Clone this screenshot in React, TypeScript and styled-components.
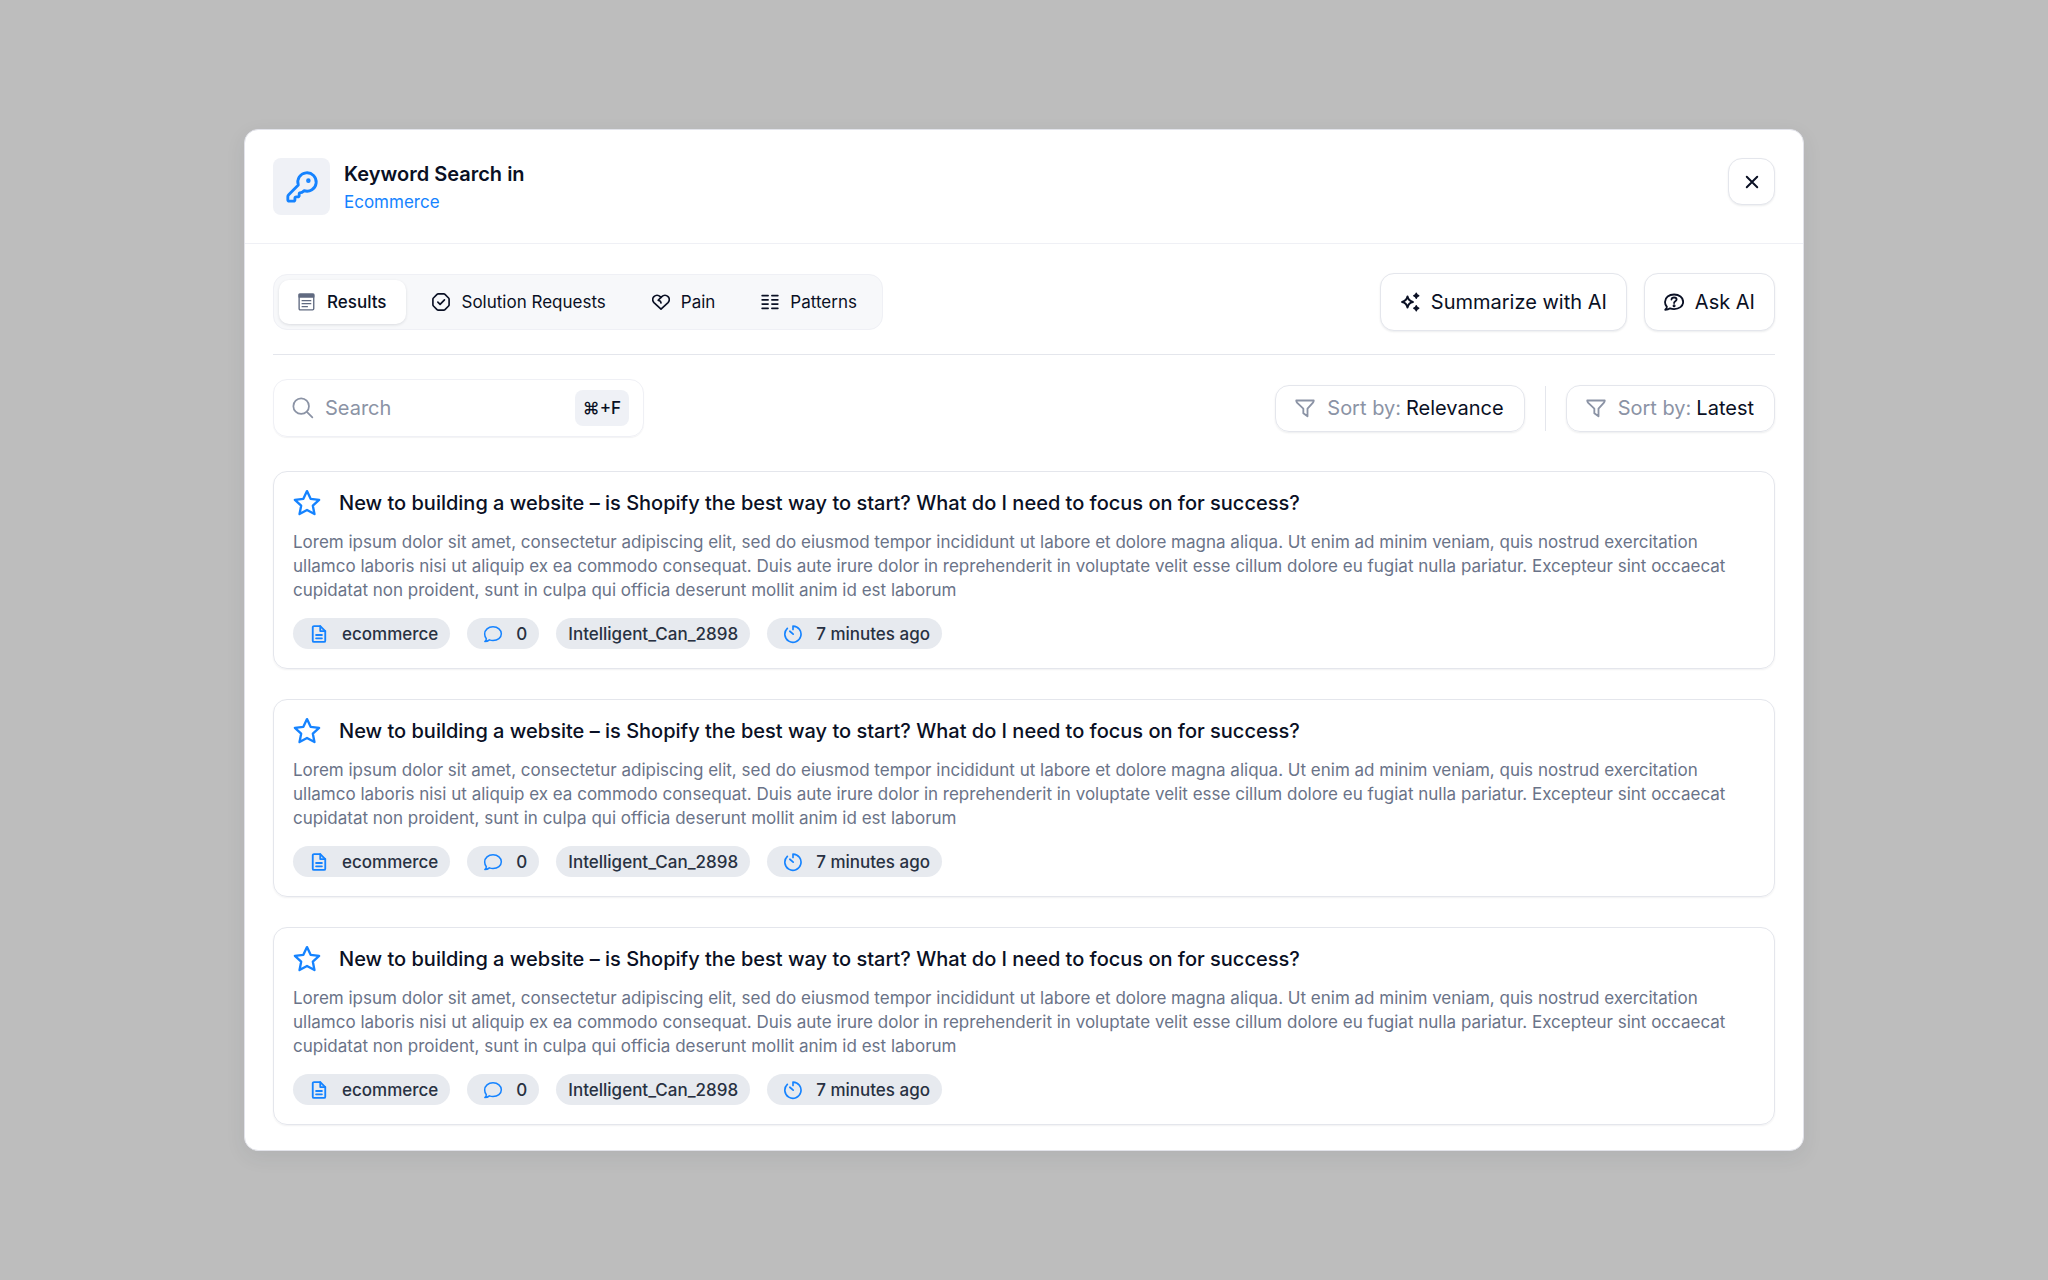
import React from "react";
import styled, { createGlobalStyle } from "styled-components";

const color = {
  ink: "#0a1024",
  text: "#283142",
  muted: "#6a7388",
  faint: "#8b93a5",
  blue: "#1583ff",
  line: "#e4e6ec",
  lineSoft: "#eff0f5",
  fill: "#eff1f6",
  pill: "#e7eaef",
};

const GlobalStyle = createGlobalStyle`
  *, *::before, *::after { box-sizing: border-box; }
  body {
    margin: 0;
    background: #bdbdbd;
    color: ${color.ink};
    font-family: Inter, "Liberation Sans", sans-serif;
    font-size: 17px;
    line-height: 24px;
  }
  button, input, select { font: inherit; color: inherit; }
  button { cursor: pointer; }
  h1, h2, p, ul { margin: 0; padding: 0; }
`;

const Page = styled.main`
  min-height: 100vh;
  padding: 32px;
  display: flex;
  align-items: center;
  justify-content: center;
`;

const Dialog = styled.section`
  width: 100%;
  max-width: 1560px;
  background: #fff;
  border: 1px solid #e2e3ea;
  border-radius: 14px;
  box-shadow: 0 6px 20px rgba(40, 45, 70, 0.08);
`;

const Header = styled.header`
  display: flex;
  align-items: flex-start;
  gap: 14px;
  padding: 28px;
  border-bottom: 1px solid ${color.lineSoft};
`;

const IconTile = styled.div`
  width: 57px;
  height: 57px;
  flex: none;
  display: grid;
  place-items: center;
  border-radius: 8px;
  background: ${color.fill};
  color: ${color.blue};
`;

const Heading = styled.div`
  flex: 1;
  padding-top: 1px;
`;

const Title = styled.h1`
  font-size: 20px;
  line-height: 30px;
  font-weight: 600;
`;

const TopicLink = styled.a`
  display: block;
  width: fit-content;
  line-height: 26px;
  color: ${color.blue};
  text-decoration: none;
`;

const OutlineButton = styled.button`
  display: inline-flex;
  align-items: center;
  justify-content: center;
  gap: 11px;
  height: 58px;
  padding: 0 19px;
  font-size: 20px;
  line-height: 28px;
  white-space: nowrap;
  background: #fff;
  border: 1px solid ${color.line};
  border-radius: 14px;
  box-shadow: 0 1px 2px rgba(16, 24, 40, 0.08);
`;

const CloseButton = styled(OutlineButton)`
  width: 47px;
  height: 47px;
  padding: 0;
`;

const Body = styled.div`
  padding: 29px 28px 25px;
`;

const Toolbar = styled.div`
  display: flex;
  flex-wrap: wrap;
  align-items: center;
  justify-content: space-between;
  gap: 16px;
  padding-bottom: 23px;
  margin-bottom: 24px;
  border-bottom: 1px solid ${color.line};
`;

const Tabs = styled.div`
  display: flex;
  gap: 7px;
  padding: 5px;
  background: #f7f8fa;
  border: 1px solid ${color.lineSoft};
  border-radius: 14px;
`;

const Tab = styled.button<{ $active?: boolean }>`
  display: inline-flex;
  align-items: center;
  gap: 11px;
  height: 44px;
  padding: 0 20px 0 19px;
  border: 0;
  border-radius: 10px;
  color: ${color.ink};
  font-weight: ${(p) => (p.$active ? 500 : 400)};
  background: ${(p) => (p.$active ? "#fff" : "transparent")};
  box-shadow: ${(p) => (p.$active ? "0 1px 3px rgba(16, 24, 40, 0.12)" : "none")};
`;

const Actions = styled.div`
  display: flex;
  align-items: center;
  gap: 17px;
`;

const Filters = styled.div`
  display: flex;
  flex-wrap: wrap;
  align-items: center;
  justify-content: space-between;
  gap: 16px;
  margin-bottom: 34px;
`;

const SearchField = styled.label`
  display: flex;
  align-items: center;
  gap: 11px;
  width: 371px;
  height: 58px;
  padding: 0 14px 0 18px;
  border: 1px solid ${color.lineSoft};
  border-radius: 14px;
  box-shadow: 0 1px 1px rgba(16, 24, 40, 0.05);
  color: ${color.faint};
`;

const SearchInput = styled.input`
  flex: 1;
  min-width: 0;
  padding: 0;
  border: 0;
  outline: 0;
  background: transparent;
  font-size: 20px;
  line-height: 28px;
  color: ${color.ink};
  &::placeholder { color: ${color.faint}; opacity: 1; }
`;

const Shortcut = styled.kbd`
  padding: 6px 8px;
  border-radius: 8px;
  background: ${color.fill};
  color: ${color.ink};
  font-family: inherit;
  font-weight: 500;
`;

const SortField = styled.label`
  display: inline-flex;
  align-items: center;
  gap: 12px;
  height: 47px;
  padding: 0 20px 0 19px;
  border: 1px solid ${color.line};
  border-radius: 14px;
  box-shadow: 0 1px 2px rgba(16, 24, 40, 0.08);
  color: ${color.faint};
  font-size: 20px;
  line-height: 28px;
  white-space: nowrap;
`;

const SortValue = styled.span`
  display: flex;
  gap: 5px;
`;

const SortSelect = styled.select`
  appearance: none;
  field-sizing: content;
  padding: 0;
  border: 0;
  background: transparent;
  color: ${color.ink};
`;

const Separator = styled.div`
  width: 1px;
  height: 45px;
  margin: 0 3px;
  background: ${color.line};
`;

const Results = styled.ul`
  display: grid;
  gap: 30px;
  list-style: none;
`;

const Card = styled.li`
  padding: 17px 19px 19px;
  border: 1px solid ${color.line};
  border-radius: 14px;
  box-shadow: 0 1px 2px rgba(16, 24, 40, 0.06);
`;

const CardHead = styled.div`
  display: flex;
  align-items: center;
  gap: 18px;
  margin-bottom: 13px;
`;

const StarButton = styled.button`
  display: flex;
  padding: 0;
  border: 0;
  background: none;
  color: ${color.blue};
`;

const CardTitle = styled.h2`
  font-size: 20px;
  line-height: 28px;
  font-weight: 500;
`;

const Excerpt = styled.p`
  margin-bottom: 16px;
  color: ${color.muted};
`;

const Tags = styled.div`
  display: flex;
  flex-wrap: wrap;
  gap: 17px;
`;

const Tag = styled.span<{ $icon?: boolean }>`
  display: inline-flex;
  align-items: center;
  gap: 13px;
  height: 31px;
  padding: 0 12px 0 ${(p) => (p.$icon ? 16 : 12)}px;
  border-radius: 16px;
  background: ${color.pill};
  color: ${color.text};
  font-weight: 500;
  svg { color: ${color.blue}; }
`;

type IconProps = { size: number; stroke?: number; children: React.ReactNode };

const Glyph = styled.svg`
  flex: none;
`;

const Icon = ({ size, stroke = 2, children }: IconProps) => (
  <Glyph
    width={size}
    height={size}
    viewBox="0 0 24 24"
    fill="none"
    stroke="currentColor"
    strokeWidth={stroke}
    strokeLinecap="round"
    strokeLinejoin="round"
    aria-hidden="true"
  >
    {children}
  </Glyph>
);

const KeyIcon = () => (
  <Icon size={34}>
    <path d="M2.6 17.4A2 2 0 0 0 2 18.8V21a1 1 0 0 0 1 1h3a1 1 0 0 0 1-1v-1a1 1 0 0 1 1-1h1a1 1 0 0 0 1-1v-1a1 1 0 0 1 1-1h.2a2 2 0 0 0 1.4-.6l.8-.8a6.5 6.5 0 1 0-4-4z" />
    <circle cx="16.5" cy="7.5" r=".6" fill="currentColor" />
  </Icon>
);

const CloseIcon = () => (
  <Icon size={18} stroke={2.6}>
    <path d="M5 5l14 14M19 5L5 19" />
  </Icon>
);

const ResultsIcon = () => (
  <Icon size={18} stroke={1.8}>
    <g color="#606a80" stroke="currentColor">
      <rect x="1.5" y="1.5" width="19.5" height="21" rx="1.5" />
      <path d="M1.5 1.5H21v3.800H1.5z" fill="currentColor" />
      <path d="M5.500 10.200h11.500M5.500 14.200h11.500M5.500 18.200h7" />
    </g>
  </Icon>
);

const CheckBadgeIcon = () => (
  <Icon size={18} stroke={2.2}>
    <path d="M8.200 1.200h7.600c.6 0 1.100.3 1.500.7l4.800 4.800c.4.400.7.900.7 1.500v7.600c0 .600-.3 1.100-.7 1.500l-4.800 4.800c-.4.400-.9.700-1.500.7H8.200c-.6 0-1.100-.3-1.500-.7l-4.800-4.800c-.4-.400-.7-.900-.7-1.500V8.200c0-.6.3-1.100.7-1.500l4.800-4.800c.4-.400.9-.7 1.500-.7z" />
    <path d="M7.800 12.200l3 3 5.800-6" />
  </Icon>
);

const BrokenHeartIcon = () => (
  <Icon size={18} stroke={2.2}>
    <path d="M12 21.600L2.600 12.800a5.600 5.600 0 0 1 0-8 5.900 5.900 0 0 1 8.300 0l1.100 1.100 1.100-1.100a5.900 5.900 0 0 1 8.300 0 5.600 5.600 0 0 1 0 8z" />
    <path d="M12 5.900L8.200 9.700l3 1.300.8 2.200" />
  </Icon>
);

const PatternsIcon = () => (
  <Icon size={18} stroke={2.2}>
    <path d="M1.500 3.500h8M14.500 3.500h8M1.500 9.200h8M14.500 9.200h8M1.500 14.800h8M14.500 14.800h8M1.500 20.500h8M14.500 20.500h8" />
  </Icon>
);

const SparklesIcon = () => (
  <Icon size={20} stroke={2.4}>
    <path d="M9 5.500c.9 4 2.500 5.600 6.500 6.500-4 .9-5.600 2.500-6.500 6.500-.9-4-2.500-5.600-6.500-6.500 4-.9 5.600-2.500 6.500-6.500z" />
    <path d="M19.500 1.500c.4 1.900 1.100 2.600 3 3-1.900.4-2.600 1.100-3 3-.4-1.900-1.100-2.600-3-3 1.900-.4 2.600-1.100 3-3zM19.500 16.500c.4 1.900 1.100 2.600 3 3-1.900.4-2.600 1.100-3 3-.4-1.900-1.100-2.600-3-3 1.900-.4 2.600-1.100 3-3z" fill="currentColor" strokeWidth="1.6" />
  </Icon>
);

const AskIcon = () => (
  <Icon size={20} stroke={2.2}>
    <path d="M1.500 21.300c1.200-1.100 1.900-2.300 1.900-3.600C2 16.200 1.200 14 1.200 11.900c0-5.200 4.900-8.900 10.900-8.900S23 6.700 23 11.900s-4.900 8.600-10.900 8.600c-1.700 0-3.300-.3-4.700-.9-1.600 1.100-3.600 1.700-5.900 1.700z" />
    <path d="M9 9c.2-1.600 1.500-2.400 3.100-2.400 1.700 0 3 1 3 2.400 0 2.200-3 2.200-3 4.200" />
    <circle cx="12.100" cy="16.500" r=".7" fill="currentColor" />
  </Icon>
);

const SearchIcon = () => (
  <Icon size={22} stroke={1.9}>
    <circle cx="10" cy="10" r="8.500" />
    <path d="M16.200 16.200L22.200 22.200" />
  </Icon>
);

const FunnelIcon = () => (
  <Icon size={20} stroke={2.2}>
    <path d="M1.500 3h21c0 1.200-.4 2-1.200 2.900L15 12.800v9.200l-5-3.700v-5.500L2.700 5.900C1.900 5 1.500 4.200 1.500 3z" />
  </Icon>
);

const StarIcon = () => (
  <Icon size={28} stroke={2}>
    <path d="M12 1.800l3.100 6.600 7.300.9-5.400 5 1.400 7.200L12 18l-6.400 3.500L7 14.300l-5.400-5 7.300-.9z" />
  </Icon>
);

const FileIcon = () => (
  <Icon size={20} stroke={2.200}>
    <path d="M6 2.500h7.500l6 6v11.500c0 .8-.6 1.500-1.500 1.500H6c-.8 0-1.500-.7-1.500-1.500V4c0-.8.7-1.500 1.500-1.500z" />
    <path d="M13.500 2.500v6h6M8.500 13.200h7M8.500 17.200h7" />
  </Icon>
);

const ChatIcon = () => (
  <Icon size={20} stroke={1.8}>
    <path d="M2.200 21c1.200-1 1.800-2.200 1.800-3.400-1.300-1.600-2-3.500-2-5.600C2 7 6.300 3.400 12 3.400S22 7 22 11.700s-4.300 8.100-10 8.100c-1.500 0-3-.3-4.300-.8C6.200 20.300 4.400 21 2.200 21z" />
  </Icon>
);

const TimerIcon = () => (
  <Icon size={20} stroke={2}>
    <path d="M12 6.500V2.500a9.700 9.700 0 1 1-6.800 2.700M8.200 8.700l4 3.500" />
  </Icon>
);

const tabs = [
  { label: "Results", icon: <ResultsIcon /> },
  { label: "Solution Requests", icon: <CheckBadgeIcon /> },
  { label: "Pain", icon: <BrokenHeartIcon /> },
  { label: "Patterns", icon: <PatternsIcon /> },
];

const post = {
  title:
    "New to building a website – is Shopify the best way to start? What do I need to focus on for success?",
  excerpt:
    "Lorem ipsum dolor sit amet, consectetur adipiscing elit, sed do eiusmod tempor incididunt ut labore et dolore magna aliqua. Ut enim ad minim veniam, quis nostrud exercitation ullamco laboris nisi ut aliquip ex ea commodo consequat. Duis aute irure dolor in reprehenderit in voluptate velit esse cillum dolore eu fugiat nulla pariatur. Excepteur sint occaecat cupidatat non proident, sunt in culpa qui officia deserunt mollit anim id est laborum",
  community: "ecommerce",
  comments: 0,
  author: "Intelligent_Can_2898",
  age: "7 minutes ago",
};

const posts = [1, 2, 3].map((id) => ({ id, ...post }));

const SortControl = ({ id, value }: { id: string; value: string }) => (
  <SortField htmlFor={id}>
    <FunnelIcon />
    <SortValue>
      Sort by:
      <SortSelect id={id} defaultValue={value}>
        <option>{value}</option>
      </SortSelect>
    </SortValue>
  </SortField>
);

export default function App() {
  const [active, setActive] = React.useState("Results");
  return (
    <>
      <GlobalStyle />
      <Page>
        <Dialog role="dialog" aria-labelledby="dialog-title">
          <Header>
            <IconTile>
              <KeyIcon />
            </IconTile>
            <Heading>
              <Title id="dialog-title">Keyword Search in</Title>
              <TopicLink href="#ecommerce">Ecommerce</TopicLink>
            </Heading>
            <CloseButton type="button" aria-label="Close">
              <CloseIcon />
            </CloseButton>
          </Header>
          <Body>
            <Toolbar>
              <Tabs role="tablist">
                {tabs.map(({ label, icon }) => (
                  <Tab
                    key={label}
                    type="button"
                    role="tab"
                    aria-selected={active === label}
                    $active={active === label}
                    onClick={() => setActive(label)}
                  >
                    {icon}
                    {label}
                  </Tab>
                ))}
              </Tabs>
              <Actions>
                <OutlineButton type="button">
                  <SparklesIcon />
                  Summarize with AI
                </OutlineButton>
                <OutlineButton type="button">
                  <AskIcon />
                  Ask AI
                </OutlineButton>
              </Actions>
            </Toolbar>
            <Filters>
              <SearchField>
                <SearchIcon />
                <SearchInput type="search" placeholder="Search" aria-label="Search" />
                <Shortcut>⌘+F</Shortcut>
              </SearchField>
              <Actions>
                <SortControl id="sort-relevance" value="Relevance" />
                <Separator />
                <SortControl id="sort-latest" value="Latest" />
              </Actions>
            </Filters>
            <Results>
              {posts.map((p) => (
                <Card key={p.id}>
                  <CardHead>
                    <StarButton type="button" aria-label="Save post">
                      <StarIcon />
                    </StarButton>
                    <CardTitle>{p.title}</CardTitle>
                  </CardHead>
                  <Excerpt>{p.excerpt}</Excerpt>
                  <Tags>
                    <Tag $icon>
                      <FileIcon />
                      {p.community}
                    </Tag>
                    <Tag $icon>
                      <ChatIcon />
                      {p.comments}
                    </Tag>
                    <Tag>{p.author}</Tag>
                    <Tag $icon>
                      <TimerIcon />
                      {p.age}
                    </Tag>
                  </Tags>
                </Card>
              ))}
            </Results>
          </Body>
        </Dialog>
      </Page>
    </>
  );
}
